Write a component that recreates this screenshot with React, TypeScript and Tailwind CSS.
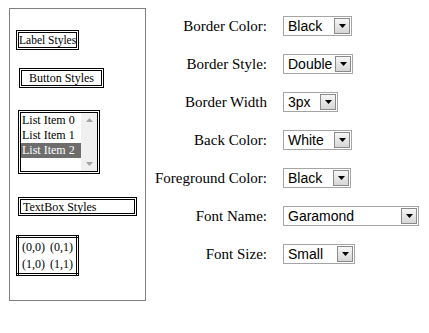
import React from "react";

function Arrow() {
  return (
    <svg width="7" height="4" viewBox="0 0 7 4" className="block">
      <path d="M0 0 H7 L3.5 4 Z" fill="#000" />
    </svg>
  );
}

function FakeSelect({ value, width }: { value: string; width: number }) {
  return (
    <div
      className="flex h-[20px] items-center justify-between border border-[#a5a5a5] bg-white pl-[4px] pr-[1px]"
      style={{ width }}
    >
      <span className="font-['Liberation_Sans',Arial,sans-serif] text-[14px] leading-none text-black">
        {value}
      </span>
      <div className="flex h-[16px] w-[16px] items-center justify-center border border-[#8a8a8a] bg-gradient-to-b from-[#f6f6f6] to-[#d6d6d6]">
        <Arrow />
      </div>
    </div>
  );
}

const rows = [
  { label: "Border Color:", value: "Black", width: 69 },
  { label: "Border Style:", value: "Double", width: 70 },
  { label: "Border Width", value: "3px", width: 55 },
  { label: "Back Color:", value: "White", width: 69 },
  { label: "Foreground Color:", value: "Black", width: 68 },
  { label: "Font Name:", value: "Garamond", width: 136 },
  { label: "Font Size:", value: "Small", width: 72 },
];

export default function App() {
  return (
    <div className="flex h-[333px] w-[429px] items-start bg-white pl-[9px] pt-[8px] font-['Liberation_Serif','Times_New_Roman',serif] text-black">
      {/* Preview panel */}
      <div className="flex h-[293px] w-[137px] shrink-0 flex-col items-start border border-[#808080] text-[12px] leading-[14px]">
        <span className="ml-[6px] mt-[21px] border-[3px] border-double border-black text-[11.5px]">
          Label Styles
        </span>

        <div className="ml-[9px] mt-[18px] flex h-[20px] w-[85px] items-center justify-center border-[3px] border-double border-black bg-white">
          Button Styles
        </div>

        <div className="ml-[8px] mt-[22px] flex h-[64px] w-[82px] border-[3px] border-double border-black">
          <div className="flex w-[60px] flex-col">
            <div className="h-[15px] pl-[1px] leading-[15px]">List Item 0</div>
            <div className="h-[15px] pl-[1px] leading-[15px]">List Item 1</div>
            <div className="h-[15px] bg-[#6d6d6d] pl-[1px] leading-[15px] text-white">List Item 2</div>
          </div>
          <div className="flex w-[16px] flex-col items-center justify-between bg-[#f0f0f0] py-[5px]">
            <svg width="7" height="4" viewBox="0 0 7 4">
              <path d="M0 4 H7 L3.5 0 Z" fill="#a3a3a3" />
            </svg>
            <svg width="7" height="4" viewBox="0 0 7 4">
              <path d="M0 0 H7 L3.5 4 Z" fill="#a3a3a3" />
            </svg>
          </div>
        </div>

        <div className="ml-[8px] mt-[23px] flex h-[19px] w-[119px] items-center border-[3px] border-double border-black pl-[2px]">
          TextBox Styles
        </div>

        <table className="ml-[6px] mt-[19px] border-[3px] border-double border-black">
          <tbody>
            <tr className="h-[19px]">
              <td className="pl-[3px] pr-[2px]">(0,0)</td>
              <td className="pl-[3px] pr-[3px]">(0,1)</td>
            </tr>
            <tr className="h-[19px]">
              <td className="pl-[3px] pr-[2px]">(1,0)</td>
              <td className="pl-[3px] pr-[3px]">(1,1)</td>
            </tr>
          </tbody>
        </table>
      </div>

      {/* Property editor */}
      <div className="mt-[-1px] flex flex-col">
        {rows.map((r) => (
          <div key={r.label} className="flex h-[38px] items-center">
            <div className="w-[121px] text-right text-[15px] leading-none">{r.label}</div>
            <div className="ml-[16px]">
              <FakeSelect value={r.value} width={r.width} />
            </div>
          </div>
        ))}
      </div>
    </div>
  );
}
